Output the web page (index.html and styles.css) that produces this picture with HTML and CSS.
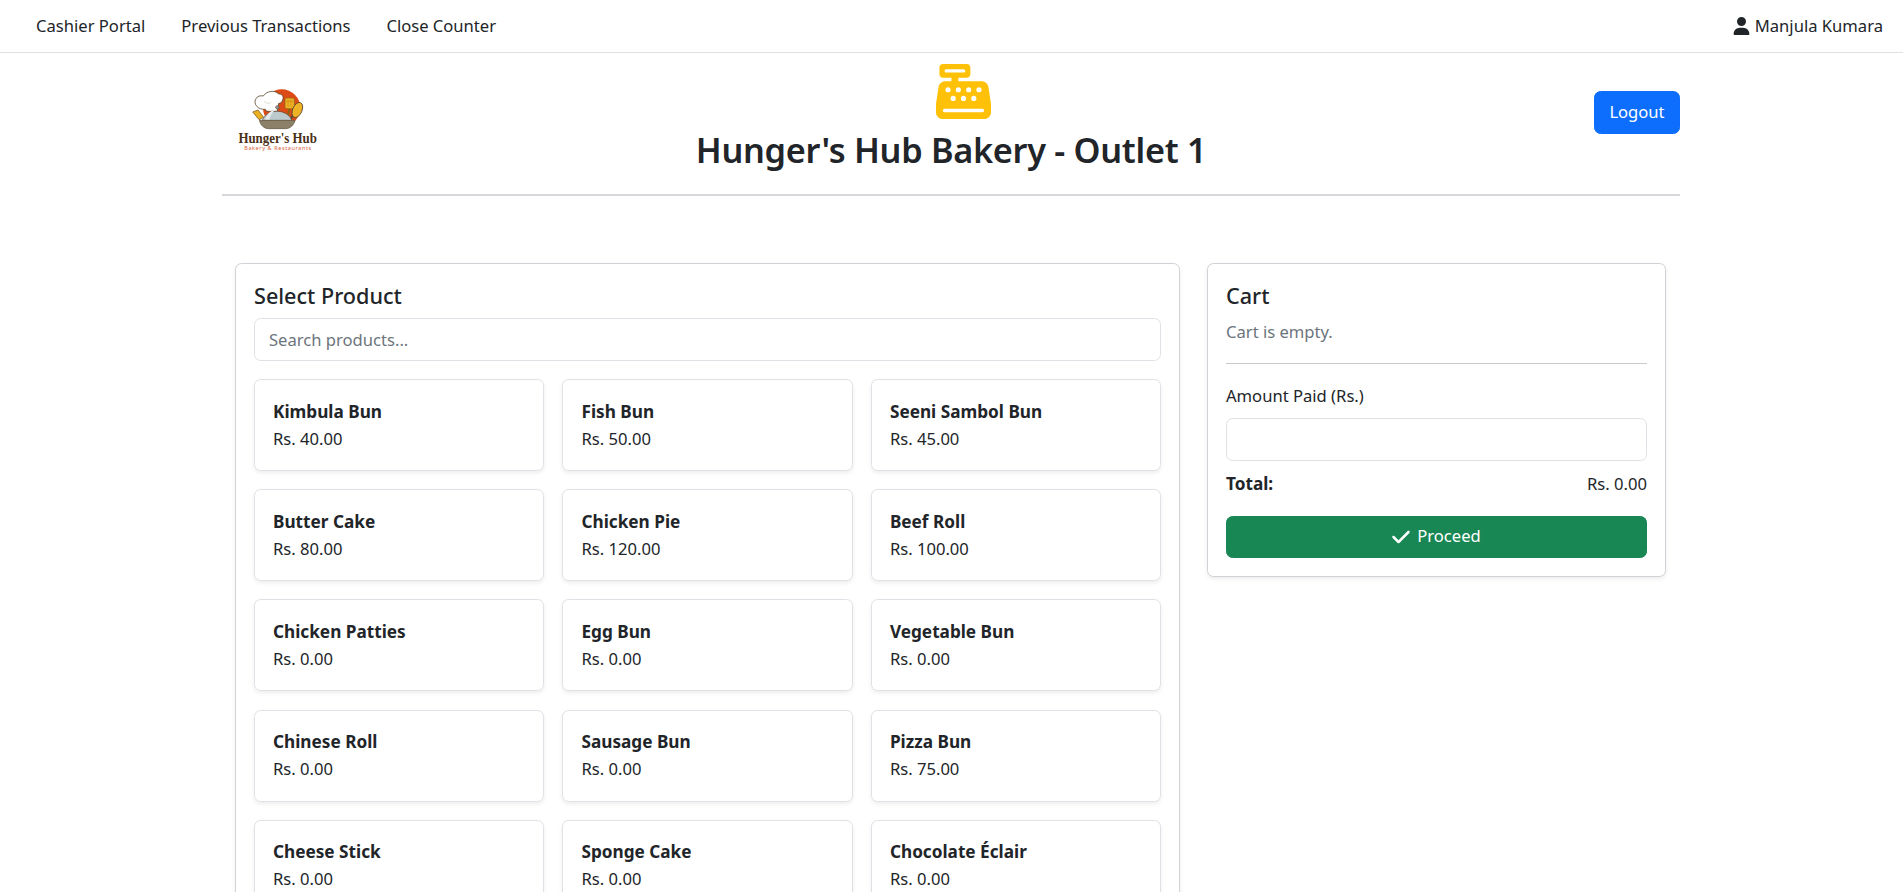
FILE: index.html
```html
<!DOCTYPE html>
<html lang="en">
<head>
<meta charset="utf-8">
<title>Hunger's Hub Bakery - Outlet 1</title>
<link rel="stylesheet" href="styles.css">
</head>
<body>
<nav class="topnav">
  <div class="nav-links">
    <a href="#">Cashier Portal</a>
    <a href="#">Previous Transactions</a>
    <a href="#">Close Counter</a>
  </div>
  <div class="nav-user">
    <svg class="icon-user" viewBox="0 0 448 512"><path d="M224 256A128 128 0 1 0 224 0a128 128 0 1 0 0 256zm-45.7 48C79.8 304 0 383.8 0 482.3C0 498.7 13.3 512 29.7 512H418.3c16.4 0 29.7-13.3 29.7-29.7C448 383.8 368.2 304 269.7 304H178.3z"/></svg>
    <span>Manjula Kumara</span>
  </div>
</nav>
<main class="container">
  <header class="brand">
    <div class="logo">
      <svg class="logo-art" viewBox="150 112 170 130">
        <circle cx="245" cy="172" r="56" fill="#dc4a16"/>
        <path d="M158 184l16-6 17 22-14 7z" fill="#eab022" stroke="#6b4a12" stroke-width="2"/>
        <path d="M262 205l6-34" stroke="#8a6414" stroke-width="6"/>
        <rect x="255" y="142" width="28" height="32" rx="5" fill="#eeb325" stroke="#8a6414" stroke-width="2"/>
        <path d="M258 152h22M264 146v22M273 146v22" stroke="#c98a14" stroke-width="2" fill="none"/>
        <path d="M270 210l12-24" stroke="#5b4a33" stroke-width="6"/>
        <ellipse cx="292" cy="178" rx="14" ry="24" transform="rotate(24 292 178)" fill="#eeb325" stroke="#5b4a33" stroke-width="2.5"/>
        <path d="M196 176c-22 2-38-16-28-32 4-8 14-10 22-8 8-14 34-20 46-6 10-2 16 8 12 18-2 8-8 10-12 10l-4 24h-32z" fill="#fff" stroke="#5b4a33" stroke-width="2.5"/>
        <path d="M192 152c10 8 16 8 22 2" fill="none" stroke="#cfc9bd" stroke-width="2"/>
        <path d="M186 210a47 40 0 0 1 90 0z" fill="#bccace" stroke="#5b4a33" stroke-width="2"/>
        <path d="M196 208c2-16 14-28 30-30-10 8-16 18-18 30z" fill="#e4eaec"/>
        <circle cx="232" cy="170" r="5" fill="#8f9ea3" stroke="#5b4a33" stroke-width="2"/>
        <path d="M178 209h107c-3 14-14 25-28 25h-52c-13 0-24-11-27-25z" fill="#8c8068" stroke="#5a4f3a" stroke-width="2"/>
      </svg>
      <span class="logo-name">Hunger's Hub</span>
      <span class="logo-sub">Bakery &amp; Restaurants</span>
    </div>
    <div class="brand-center">
      <svg class="icon-register" viewBox="0 0 512 512"><path d="M64 0C46.3 0 32 14.3 32 32V96c0 17.7 14.3 32 32 32h80v32H87c-31.6 0-58.5 23.1-63.3 54.4L1.1 364.1C.4 368.8 0 373.6 0 378.4V448c0 35.3 28.7 64 64 64H448c35.3 0 64-28.7 64-64V378.4c0-4.8-.4-9.6-1.1-14.4L488.2 214.4C483.5 183.1 456.6 160 425 160H208V128h80c17.7 0 32-14.3 32-32V32c0-17.7-14.3-32-32-32H64zM96 48H256c8.8 0 16 7.2 16 16s-7.2 16-16 16H96c-8.8 0-16-7.2-16-16s7.2-16 16-16zM64 432c0-8.8 7.2-16 16-16H432c8.8 0 16 7.2 16 16s-7.2 16-16 16H80c-8.8 0-16-7.2-16-16zm48-168a24 24 0 1 1 0-48 24 24 0 1 1 0 48zm120-24a24 24 0 1 1 -48 0 24 24 0 1 1 48 0zM160 344a24 24 0 1 1 0-48 24 24 0 1 1 0 48zM328 240a24 24 0 1 1 -48 0 24 24 0 1 1 48 0zM256 344a24 24 0 1 1 0-48 24 24 0 1 1 0 48zM424 240a24 24 0 1 1 -48 0 24 24 0 1 1 48 0zM352 344a24 24 0 1 1 0-48 24 24 0 1 1 0 48z"/></svg>
      <h1>Hunger's Hub Bakery - Outlet 1</h1>
    </div>
    <button class="btn-logout">Logout</button>
  </header>
  <div class="columns">
    <section class="panel">
      <h2>Select Product</h2>
      <input class="field search" type="text" placeholder="Search products...">
      <div class="product-grid">
        <article class="product"><strong>Kimbula Bun</strong><span>Rs. 40.00</span></article>
        <article class="product"><strong>Fish Bun</strong><span>Rs. 50.00</span></article>
        <article class="product"><strong>Seeni Sambol Bun</strong><span>Rs. 45.00</span></article>
        <article class="product"><strong>Butter Cake</strong><span>Rs. 80.00</span></article>
        <article class="product"><strong>Chicken Pie</strong><span>Rs. 120.00</span></article>
        <article class="product"><strong>Beef Roll</strong><span>Rs. 100.00</span></article>
        <article class="product"><strong>Chicken Patties</strong><span>Rs. 0.00</span></article>
        <article class="product"><strong>Egg Bun</strong><span>Rs. 0.00</span></article>
        <article class="product"><strong>Vegetable Bun</strong><span>Rs. 0.00</span></article>
        <article class="product"><strong>Chinese Roll</strong><span>Rs. 0.00</span></article>
        <article class="product"><strong>Sausage Bun</strong><span>Rs. 0.00</span></article>
        <article class="product"><strong>Pizza Bun</strong><span>Rs. 75.00</span></article>
        <article class="product"><strong>Cheese Stick</strong><span>Rs. 0.00</span></article>
        <article class="product"><strong>Sponge Cake</strong><span>Rs. 0.00</span></article>
        <article class="product"><strong>Chocolate Éclair</strong><span>Rs. 0.00</span></article>
      </div>
    </section>
    <aside class="panel cart">
      <h2>Cart</h2>
      <p class="cart-empty">Cart is empty.</p>
      <hr class="cart-rule">
      <label class="cart-label" for="paid">Amount Paid (Rs.)</label>
      <input class="field" id="paid" type="text">
      <div class="total"><strong>Total:</strong><span>Rs. 0.00</span></div>
      <button class="btn-proceed">
        <svg class="icon-check" viewBox="0 0 448 512"><path d="M438.6 105.4c12.5 12.5 12.5 32.8 0 45.3l-256 256c-12.5 12.5-32.8 12.5-45.3 0l-128-128c-12.5-12.5-12.5-32.8 0-45.3s32.8-12.5 45.3 0L160 338.7 393.4 105.4c12.5-12.5 32.8-12.5 45.3 0z"/></svg>
        Proceed
      </button>
    </aside>
  </div>
</main>
</body>
</html>
```
FILE: styles.css
```css
* { box-sizing: border-box; }
html, body { margin: 0; height: 100%; overflow: hidden; }
body {
  font-family: "Noto Sans", "Open Sans", sans-serif;
  font-size: 16.6px;
  line-height: 26.4px;
  color: #212529;
  background: #fff;
}
.topnav {
  height: 53px;
  border-bottom: 1px solid #dee2e6;
  display: flex;
  align-items: center;
  justify-content: space-between;
  padding: 0 20px 0 36px;
}
.nav-links { display: flex; gap: 36px; }
.nav-links a { color: #212529; text-decoration: none; }
.nav-user { display: flex; align-items: center; gap: 5px; }
.icon-user { width: 17px; height: 18px; fill: #212529; }
.container { width: 1458px; margin-left: 222px; }
.brand {
  height: 143px;
  border-bottom: 2px solid #d6d8db;
  display: grid;
  grid-template-columns: 1fr auto 1fr;
}
.logo {
  display: flex;
  flex-direction: column;
  align-items: center;
  width: 84px;
  margin: 35px 0 0 14px;
}
.logo-art { width: 56.7px; height: 43.3px; display: block; flex: none; }
.logo-name {
  font-family: "Liberation Serif", serif;
  font-weight: 700;
  font-size: 15px;
  line-height: 14px;
  color: #4a3016;
  white-space: nowrap;
  transform: scaleX(.86);
}
.logo-sub {
  font-size: 5.5px;
  line-height: 7px;
  letter-spacing: .6px;
  color: #d9603a;
  white-space: nowrap;
}
.brand-center { display: flex; flex-direction: column; align-items: center; padding-top: 11px; }
.icon-register { width: 55px; height: 55px; fill: #ffc107; margin-left: 25px; }
h1 { margin: 10px 0 0; font-size: 34.3px; line-height: 42px; font-weight: 600; letter-spacing: -.3px; }
.btn-logout {
  justify-self: end;
  margin-top: 38px;
  height: 43px;
  width: 86px;
  background: #0d6efd;
  color: #fff;
  border: 1px solid #0d6efd;
  border-radius: 6.6px;
  font: inherit;
}
.columns {
  display: grid;
  grid-template-columns: 945px 459px;
  gap: 27px;
  padding: 67px 13px 0;
  align-items: start;
}
.panel {
  border: 1px solid #cfd2d6;
  border-radius: 6.6px;
  box-shadow: 0 2px 4px rgba(0,0,0,.075);
  padding: 18px;
  background: #fff;
}
h2 { margin: 0 0 8px; font-size: 21.6px; line-height: 28px; font-weight: 500; }
.field {
  display: block;
  width: 100%;
  height: 43px;
  padding: 0 14px;
  border: 1px solid #dee2e6;
  border-radius: 6.6px;
  font: inherit;
  color: #212529;
}
.field::placeholder { color: #6c757d; opacity: 1; }
.search { margin-bottom: 18px; }
.product-grid { display: grid; grid-template-columns: repeat(3, 1fr); gap: 18.2px 18.4px; }
.product {
  height: 92px;
  border: 1px solid #dee2e6;
  border-radius: 6.6px;
  box-shadow: 0 2px 4px rgba(0,0,0,.075);
  padding: 17.5px 18px;
  display: flex;
  flex-direction: column;
}
.product strong { font-weight: 700; font-size: 17.2px; line-height: 28px; }
.product span { line-height: 25px; }
.cart-empty { margin: 9.4px 0 17.4px; color: #6c757d; }
.cart-rule { margin: 0 0 19px; border: 0; border-top: 1px solid #c8cacc; }
.cart-label { display: block; margin-bottom: 8.6px; }
.total { display: flex; justify-content: space-between; margin: 9.4px 0 18.6px; }
.total strong { font-size: 17.2px; }
.btn-proceed {
  display: flex;
  align-items: center;
  justify-content: center;
  gap: 7px;
  width: 100%;
  height: 42px;
  background: #198754;
  border: 1px solid #198754;
  border-radius: 6.6px;
  color: #fff;
  font: inherit;
}
.icon-check { width: 18px; height: 20px; fill: #fff; }
```
